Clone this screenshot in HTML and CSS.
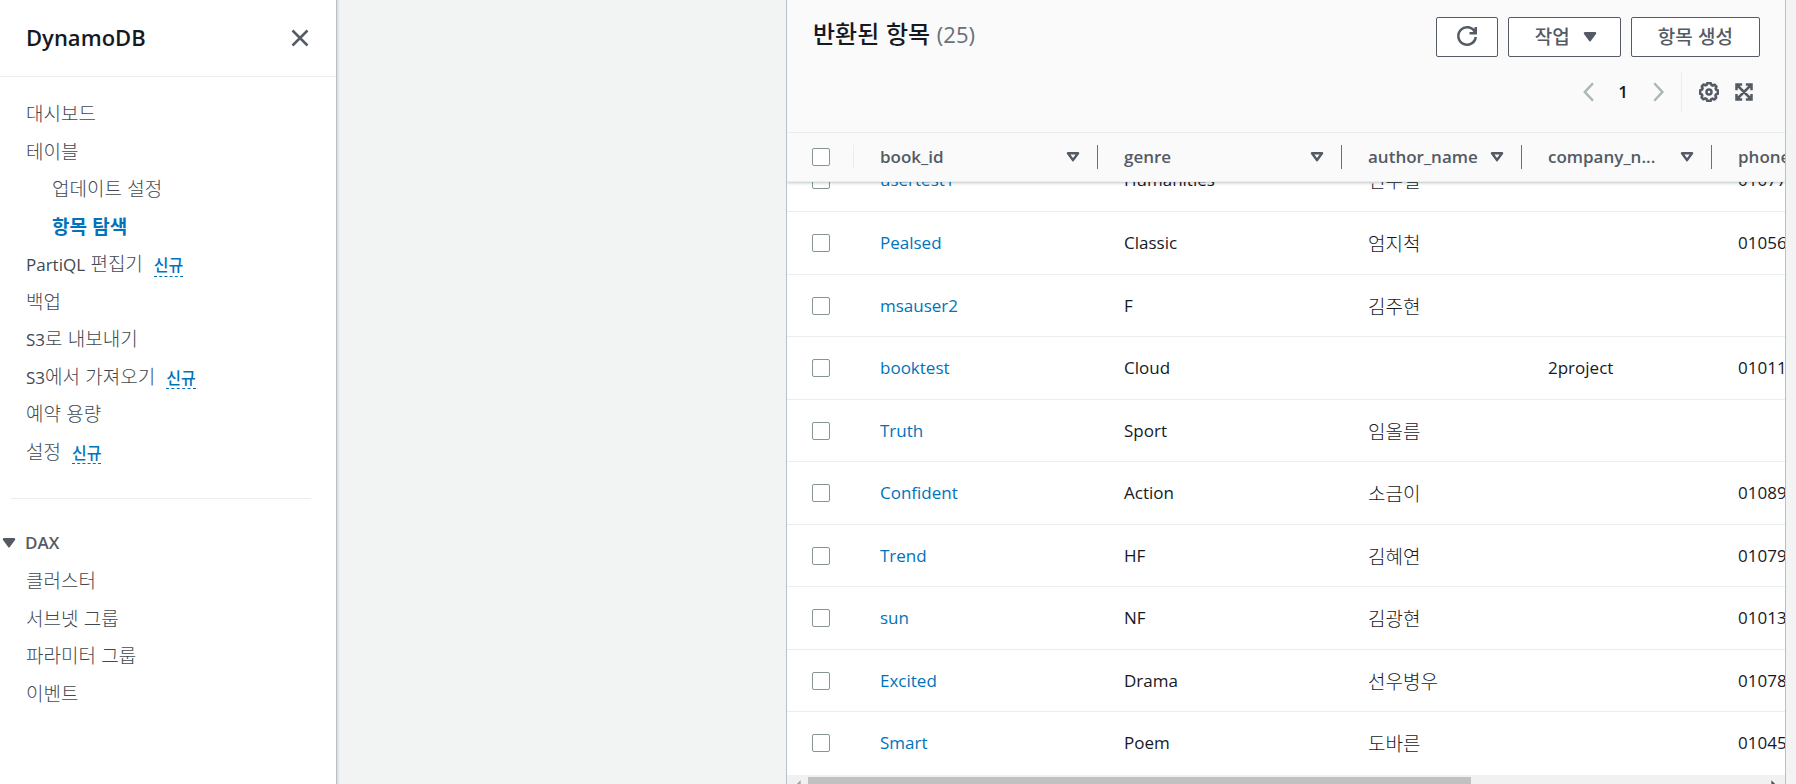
FILE: index.html
```html
<!DOCTYPE html>
<html lang="ko">
<head>
<meta charset="utf-8">
<title>DynamoDB</title>
<link rel="stylesheet" href="styles.css">
</head>
<body>
<svg class="sprite" aria-hidden="true">
  <symbol id="sort" viewBox="0 0 16 16"><path d="M4 5h8l-4 5.500z" fill="none" stroke="currentColor" stroke-width="2" stroke-linejoin="round"/></symbol>
  <symbol id="caret" viewBox="0 0 16 16"><path d="M4 5h8l-4 5.500z" fill="currentColor" stroke="currentColor" stroke-width="2" stroke-linejoin="round"/></symbol>
</svg>
<div class="app">
  <aside class="sidebar">
    <header class="sidebar-head">
      <h2 class="service">DynamoDB</h2>
      <button class="icon-button" type="button" aria-label="닫기"><svg class="icon" viewBox="0 0 16 16"><path d="m2 2 12 12M14 2 2 14" fill="none" stroke="currentColor" stroke-width="2"/></svg></button>
    </header>
    <nav class="nav">
      <ul class="nav-list">
        <li><a href="#">대시보드</a></li>
        <li><a href="#">테이블</a></li>
        <li class="nested"><a href="#">업데이트 설정</a></li>
        <li class="nested"><a href="#" class="active">항목 탐색</a></li>
        <li><a href="#"><span class="latin">PartiQL</span> 편집기</a><button class="badge" type="button">신규</button></li>
        <li><a href="#">백업</a></li>
        <li><a href="#"><span class="latin">S3</span>로 내보내기</a></li>
        <li><a href="#"><span class="latin">S3</span>에서 가져오기</a><button class="badge" type="button">신규</button></li>
        <li><a href="#">예약 용량</a></li>
        <li><a href="#">설정</a><button class="badge" type="button">신규</button></li>
      </ul>
      <hr class="divider">
      <button class="section" type="button"><svg class="icon"><use href="#caret"/></svg>DAX</button>
      <ul class="nav-list">
        <li><a href="#">클러스터</a></li>
        <li><a href="#">서브넷 그룹</a></li>
        <li><a href="#">파라미터 그룹</a></li>
        <li><a href="#">이벤트</a></li>
      </ul>
    </nav>
  </aside>
  <main class="content">
    <section class="panel">
      <div class="panel-top">
        <header class="panel-head">
          <h2 class="panel-title">반환된 항목 <span class="count">(25)</span></h2>
          <div class="actions">
            <button class="button" type="button" aria-label="새로 고침"><svg class="icon" viewBox="0 0 16 16"><path d="M10 5h5V0M15 8a7 7 0 1 1-.7-4" fill="none" stroke="currentColor" stroke-width="2"/></svg></button>
            <button class="button" type="button">작업<svg class="icon"><use href="#caret"/></svg></button>
            <button class="button" type="button">항목 생성</button>
          </div>
        </header>
        <div class="tools">
          <div class="pager">
            <button class="icon-button muted" type="button" aria-label="이전"><svg class="icon" viewBox="0 0 16 16"><path d="M12 1 5.500 8l6.500 7" fill="none" stroke="currentColor" stroke-width="2"/></svg></button>
            <button class="page" type="button">1</button>
            <button class="icon-button muted" type="button" aria-label="다음"><svg class="icon" viewBox="0 0 16 16"><path d="m5 1 6.500 7L5 15" fill="none" stroke="currentColor" stroke-width="2"/></svg></button>
          </div>
          <div class="prefs">
            <button class="icon-button" type="button" aria-label="기본 설정"><svg class="icon" viewBox="0 0 16 16"><path d="M6.500 1h3l.5 1.500 1 .4 1.500-.7 1.500 1.500-.7 1.500.4 1L15 6.500v3l-1.500.5-.4 1 .7 1.500-1.500 1.500-1.500-.7-1 .4L9.500 15h-3L6 13.500l-1-.4-1.500.7L2 12.300l.7-1.500-.4-.8L1 9.500v-3L2.500 6l.4-1-.7-1.500 1.500-1.500 1.500.7.8-.2z" fill="none" stroke="currentColor" stroke-width="2" stroke-linejoin="round"/><circle cx="8" cy="8" r="2" fill="none" stroke="currentColor" stroke-width="2"/></svg></button>
            <button class="icon-button" type="button" aria-label="전체 화면"><svg class="icon" viewBox="0 0 16 16"><path d="M6.500 2H2v4.500M9.500 2H14v4.500M6.500 14H2V9.500M9.500 14H14V9.500M2 2l12 12M14 2 2 14" fill="none" stroke="currentColor" stroke-width="2"/></svg></button>
          </div>
        </div>
        <table class="grid grid-head">
          <colgroup><col class="c-check"><col class="c-wide"><col class="c-wide"><col class="c-author"><col class="c-company"><col></colgroup>
          <thead>
            <tr>
              <th><input type="checkbox" class="check" aria-label="모두 선택"></th>
              <th><div class="th"><span class="th-label">book_id</span><svg class="icon"><use href="#sort"/></svg></div></th>
              <th><div class="th"><span class="th-label">genre</span><svg class="icon"><use href="#sort"/></svg></div></th>
              <th><div class="th"><span class="th-label">author_name</span><svg class="icon"><use href="#sort"/></svg></div></th>
              <th><div class="th"><span class="th-label">company_n...</span><svg class="icon"><use href="#sort"/></svg></div></th>
              <th><div class="th"><span class="th-label">phone</span></div></th>
            </tr>
          </thead>
        </table>
      </div>
      <div class="rows">
        <table class="grid grid-body">
          <colgroup><col class="c-check"><col class="c-wide"><col class="c-wide"><col class="c-author"><col class="c-company"><col></colgroup>
          <tbody>
            <tr><td><input type="checkbox" class="check" aria-label="usertest1"></td><td><a href="#">usertest1</a></td><td>Humanities</td><td class="ko">선우철</td><td></td><td>01077</td></tr>
            <tr><td><input type="checkbox" class="check" aria-label="Pealsed"></td><td><a href="#">Pealsed</a></td><td>Classic</td><td class="ko">엄지척</td><td></td><td>01056</td></tr>
            <tr><td><input type="checkbox" class="check" aria-label="msauser2"></td><td><a href="#">msauser2</a></td><td>F</td><td class="ko">김주현</td><td></td><td></td></tr>
            <tr><td><input type="checkbox" class="check" aria-label="booktest"></td><td><a href="#">booktest</a></td><td>Cloud</td><td></td><td>2project</td><td>01011</td></tr>
            <tr><td><input type="checkbox" class="check" aria-label="Truth"></td><td><a href="#">Truth</a></td><td>Sport</td><td class="ko">임올름</td><td></td><td></td></tr>
            <tr><td><input type="checkbox" class="check" aria-label="Confident"></td><td><a href="#">Confident</a></td><td>Action</td><td class="ko">소금이</td><td></td><td>01089</td></tr>
            <tr><td><input type="checkbox" class="check" aria-label="Trend"></td><td><a href="#">Trend</a></td><td>HF</td><td class="ko">김혜연</td><td></td><td>01079</td></tr>
            <tr><td><input type="checkbox" class="check" aria-label="sun"></td><td><a href="#">sun</a></td><td>NF</td><td class="ko">김광현</td><td></td><td>01013</td></tr>
            <tr><td><input type="checkbox" class="check" aria-label="Excited"></td><td><a href="#">Excited</a></td><td>Drama</td><td class="ko">선우병우</td><td></td><td>01078</td></tr>
            <tr><td><input type="checkbox" class="check" aria-label="Smart"></td><td><a href="#">Smart</a></td><td>Poem</td><td class="ko">도바른</td><td></td><td>01045</td></tr>
          </tbody>
        </table>
      </div>
      <div class="scrollbar" aria-hidden="true">
        <svg class="arrow" viewBox="0 0 20 20"><path d="M13 5v10l-5-5z" fill="#a3a3a3"/></svg>
        <div class="track"><div class="thumb"></div></div>
        <svg class="arrow" viewBox="0 0 20 20"><path d="M7 5v10l5-5z" fill="#505050"/></svg>
      </div>
    </section>
  </main>
</div>
</body>
</html>
```
FILE: styles.css
```css
* { box-sizing: border-box; }

body {
  margin: 0;
  overflow: hidden;
  background: #f2f3f3;
  color: #16191f;
  font: 17px/24px "Open Sans", "Noto Sans CJK KR", sans-serif;
}

button {
  font: inherit;
  color: inherit;
  border: 0;
  padding: 0;
  background: none;
  cursor: pointer;
}

a { color: #0073bb; text-decoration: none; }
h2 { margin: 0; }
.sprite { position: absolute; width: 0; height: 0; }
.icon { display: block; width: 20px; height: 20px; flex: none; overflow: visible; }

.app { display: flex; height: 100vh; }

/* Sidebar */
.sidebar {
  flex: 0 0 337px;
  background: #fff;
  border-right: 1px solid #b9c1c6;
  box-shadow: 1px 0 2px rgba(0, 28, 36, 0.15);
}

.sidebar-head {
  display: flex;
  align-items: center;
  justify-content: space-between;
  height: 77px;
  padding: 0 26px;
  border-bottom: 1px solid #eaeded;
}

.service { padding-bottom: 3px; font-size: 22px; line-height: 28px; font-weight: 600; }
.icon-button { display: flex; color: #545b64; }

.nav { padding-top: 17px; color: #545b64; }

.nav-list {
  list-style: none;
  margin: 0;
  padding: 0 26px;
  font: 300 19px/37px "Noto Sans CJK KR", sans-serif;
}

.nav-list li { display: flex; align-items: center; height: 37px; gap: 11px; white-space: pre; }
.nav-list li:nth-child(even) { height: 38px; }
.nav-list a { color: #414850; }
.nav-list .nested { padding-left: 26px; }
.nav-list .active { color: #0073bb; font-weight: 700; }
.latin { font: 400 17px/24px "Open Sans", sans-serif; }

.badge {
  height: 24px;
  margin-top: 4px;
  color: #0073bb;
  font: 500 16px/22px "Noto Sans CJK KR", sans-serif;
  border-bottom: 1px dashed #0073bb;
}

.divider {
  height: 1px;
  margin: 29px 25px 25px 11px;
  border: 0;
  background: #eaeded;
}

.section {
  display: flex;
  align-items: center;
  height: 37px;
  gap: 6px;
  font-weight: 600;
}

.section .icon { margin-left: -1px; }

/* Panel */
.content { flex: 1; min-width: 0; padding: 0 10px 0 449px; }

.panel {
  height: 100vh;
  overflow: hidden;
  background: #fff;
  border: 1px solid #b9c1c6;
  border-width: 0 1px;
}

.panel-top {
  position: relative;
  z-index: 1;
  background: #fafafa;
  box-shadow: 0 1px 3px rgba(0, 28, 36, 0.25);
}

.panel-head {
  display: flex;
  align-items: flex-start;
  justify-content: space-between;
  padding: 17px 25px 0 26px;
}

.panel-title { font: 500 24px/32px "Noto Sans CJK KR", sans-serif; }
.count { font: 400 22px/28px "Open Sans", sans-serif; color: #687078; }
.actions { display: flex; gap: 10px; }

.button {
  display: flex;
  align-items: center;
  gap: 10px;
  height: 40px;
  padding: 0 20px;
  border: 1px solid #545b64;
  border-radius: 2px;
  background: #fff;
  color: #545b64;
  font: 500 19px/24px "Noto Sans CJK KR", sans-serif;
}

.button:last-child { padding: 0 26px 3px; }
.button:nth-child(2) { padding: 0 20px 3px 26px; }
.button:nth-child(2) .icon { margin-top: 3px; }

.tools { display: flex; justify-content: flex-end; padding: 15px 31px 20px; }
.pager { display: flex; align-items: center; gap: 20px; padding-right: 13px; }
.pager .page { font-weight: 600; }
.muted { color: #aab7b8; }
.prefs { display: flex; align-items: center; gap: 15px; height: 40px; padding-left: 17px; border-left: 1px solid #eaeded; }

/* Table */
.grid { width: 1080px; table-layout: fixed; border-collapse: collapse; }
.grid th, .grid td { padding: 0 0 0 26px; text-align: left; white-space: nowrap; }
.grid th:first-child, .grid td:first-child { padding-left: 25px; }
.c-check { width: 67px; }
.c-wide { width: 244px; }
.c-author { width: 180px; }
.c-company { width: 190px; }

.grid-head { border-top: 1px solid #eaeded; border-bottom: 1px solid #eaeded; }
.grid-head th { height: 49px; font-weight: 600; color: #545b64; background: linear-gradient(#687078, #687078) right center / 1px 24px no-repeat; }
.grid-head th:first-child { background-image: linear-gradient(#eaeded, #eaeded); }
.grid-head th:last-child { background: none; }
.th { display: flex; align-items: center; justify-content: space-between; padding-right: 15px; }

.check {
  appearance: none;
  display: block;
  width: 18px;
  height: 18px;
  margin: 0;
  border: 1px solid #879596;
  border-radius: 2px;
  background: #fff;
}

.rows { margin-top: -33px; }
.grid-body tr { height: 62px; border-bottom: 1px solid #eaeded; }
.grid-body tr:nth-child(even) { height: 63px; }
.grid-body tr:last-child { border-bottom-color: #fff; }
.grid-body td { padding-top: 1px; }
.grid-body .ko { font: 300 19px/24px "Noto Sans CJK KR", sans-serif; }

.scrollbar { display: flex; background: #f1f1f1; height: 21px; }
.arrow { width: 21px; height: 21px; flex: none; }
.track { flex: 1; padding: 2px 0; }
.thumb { width: 69.4%; height: 17px; background: #c1c1c1; }
```
